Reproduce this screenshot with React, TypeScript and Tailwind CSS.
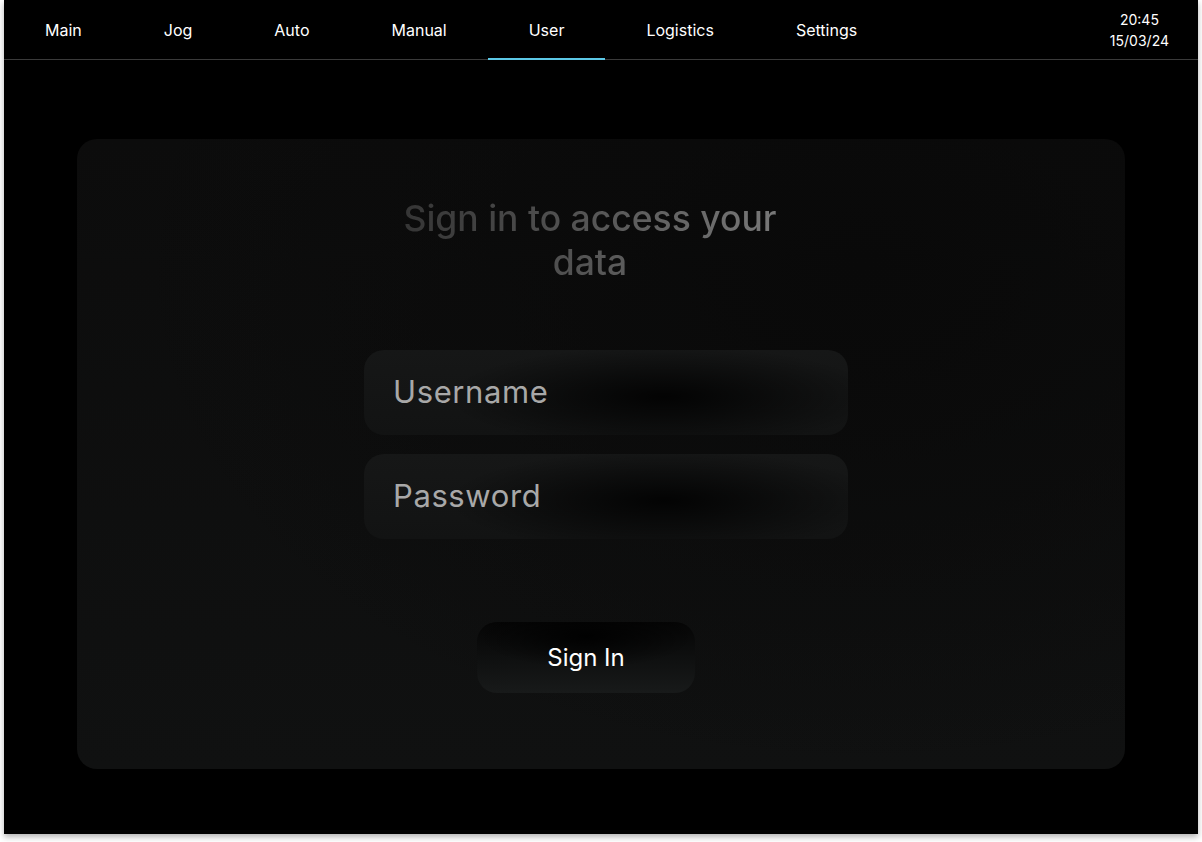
const tabs = ['Main', 'Jog', 'Auto', 'Manual', 'User', 'Logistics', 'Settings'];

function NavBar({ active }: { active: string }) {
  return (
    <div className="flex h-[60px] items-stretch border-b border-[#3a3a3a]">
      <div className="flex">
        {tabs.map((t) => (
          <div
            key={t}
            className="relative flex items-center px-[41px] text-[16px] text-white"
          >
            {t}
            {t === active && (
              <div className="absolute -bottom-[1px] left-0 right-0 h-[2px] bg-[#5cc8e6]" />
            )}
          </div>
        ))}
      </div>
      <div className="ml-auto flex flex-col justify-center pr-[29px] text-center text-[14px] leading-[21px] text-white">
        <span>20:45</span>
        <span>15/03/24</span>
      </div>
    </div>
  );
}

function Field({ placeholder }: { placeholder: string }) {
  return (
    <div className="flex h-[85px] w-[484px] items-center rounded-[20px] bg-[radial-gradient(ellipse_45%_60%_at_62%_55%,rgba(0,0,0,0.85)_0%,rgba(0,0,0,0)_100%),linear-gradient(to_bottom,#161717,#121313)] pl-[29px] text-[31px] tracking-[0.6px] text-[#a8a8a8]">
      {placeholder}
    </div>
  );
}

export default function App() {
  return (
    <div className="min-h-[842px] bg-white" style={{ fontFamily: 'Inter, "Noto Sans", sans-serif' }}>
      <div className="ml-[4px] flex h-[834px] w-[1194px] flex-col bg-black shadow-[0_3px_6px_rgba(0,0,0,0.3)]">
        <NavBar active="User" />

        <div className="mx-[73px] mt-[79px] flex h-[630px] flex-col items-start rounded-[20px] bg-[radial-gradient(ellipse_70%_80%_at_75%_20%,#090909_0%,rgba(9,9,9,0)_100%),linear-gradient(to_bottom,#0c0c0c,#101111)] pt-[58px]">
          <h1 className="ml-[313px] w-[400px] bg-linear-to-r from-[#333333] to-[#7a7a7a] bg-clip-text text-center text-[35.5px] font-medium leading-[44px] text-transparent">
            Sign in to access your data
          </h1>

          <div className="ml-[287px] mt-[65px] flex flex-col gap-[19px]">
            <Field placeholder="Username" />
            <Field placeholder="Password" />
          </div>

          <button className="ml-[400px] mt-[83px] flex h-[71px] w-[218px] items-center justify-center rounded-[20px] bg-[radial-gradient(ellipse_50%_45%_at_50%_20%,rgba(0,0,0,0.9)_0%,rgba(0,0,0,0)_100%),linear-gradient(to_bottom,#050505,#181a1a)] text-[24px] text-white">
            Sign In
          </button>
        </div>
      </div>
    </div>
  );
}
